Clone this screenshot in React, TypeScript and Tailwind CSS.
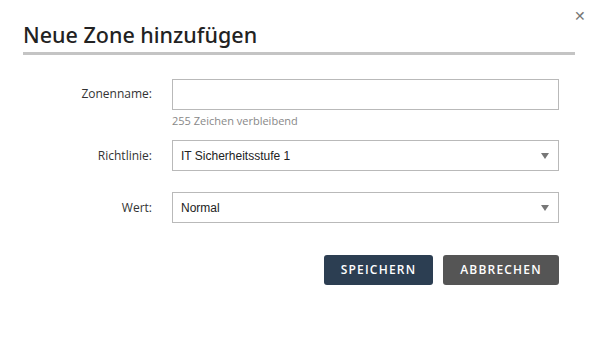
import React from "react";

function SelectBox({ value }: { value: string }) {
  return (
    <div className="flex items-center justify-between w-[387px] h-[31px] border border-[#b9b9b9] bg-white pl-[8px] pr-[9px]">
      <span className="text-[12px] text-[#222] font-['Liberation_Sans',sans-serif]">{value}</span>
      <svg width="8" height="6" viewBox="0 0 8 6">
        <polygon points="0,0 8,0 4,6" fill="#777" />
      </svg>
    </div>
  );
}

export default function App() {
  return (
    <div className="relative w-[590px] h-[340px] bg-white font-['Open_Sans',sans-serif]">
      <button className="absolute left-[574px] top-[9px] text-[14px] leading-none text-[#777]">✕</button>
      <div className="px-[23px] pt-[20px]">
        <h1 className="text-[21.5px] leading-[30px] font-medium text-[#222] font-['Noto_Sans',sans-serif]">
          Neue Zone hinzufügen
        </h1>
        <div className="mt-[2px] h-[3px] w-[552px] bg-[#c4c4c4]" />
      </div>

      <div className="flex flex-col mt-[24px]">
        <div className="flex items-start gap-[20px]">
          <label className="w-[152px] text-right text-[12px] leading-[29px] text-[#333]">Zonenname:</label>
          <div className="flex flex-col">
            <input className="w-[387px] h-[31px] border border-[#b9b9b9] outline-none px-[8px] text-[12px]" />
            <span className="mt-[4px] text-[11px] leading-[14px] text-[#888]">255 Zeichen verbleibend</span>
          </div>
        </div>

        <div className="flex items-center gap-[20px] mt-[12px]">
          <label className="w-[152px] text-right text-[12px] text-[#333]">Richtlinie:</label>
          <SelectBox value="IT Sicherheitsstufe 1" />
        </div>

        <div className="flex items-center gap-[20px] mt-[21px]">
          <label className="w-[152px] text-right text-[12px] text-[#333]">Wert:</label>
          <SelectBox value="Normal" />
        </div>

        <div className="flex justify-end gap-[10px] w-[559px] mt-[32px]">
          <button className="w-[109px] h-[30px] rounded-[3px] bg-[#2c3e52] text-white text-[12px] font-semibold tracking-[1.2px]">
            SPEICHERN
          </button>
          <button className="w-[116px] h-[30px] rounded-[3px] bg-[#555555] text-white text-[12px] font-semibold tracking-[1.2px]">
            ABBRECHEN
          </button>
        </div>
      </div>
    </div>
  );
}
